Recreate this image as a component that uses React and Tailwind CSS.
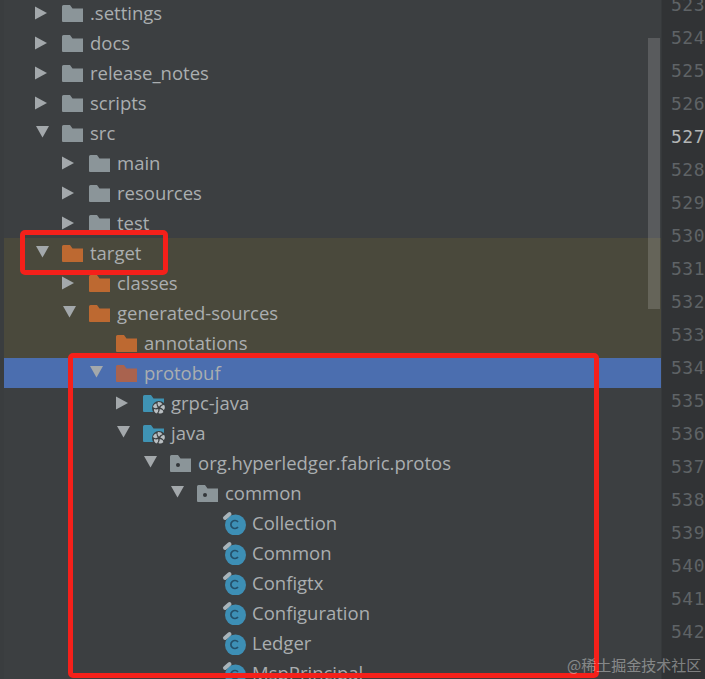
const rows = [
  { name: '.settings', pad: 'pl-[31px]', arrow: 'right', icon: 'folder' },
  { name: 'docs', pad: 'pl-[31px]', arrow: 'right', icon: 'folder' },
  { name: 'release_notes', pad: 'pl-[31px]', arrow: 'right', icon: 'folder' },
  { name: 'scripts', pad: 'pl-[31px]', arrow: 'right', icon: 'folder' },
  { name: 'src', pad: 'pl-[31px]', arrow: 'down', icon: 'folder' },
  { name: 'main', pad: 'pl-[58px]', arrow: 'right', icon: 'folder' },
  { name: 'resources', pad: 'pl-[58px]', arrow: 'right', icon: 'folder' },
  { name: 'test', pad: 'pl-[58px]', arrow: 'right', icon: 'folder' },
  { name: 'target', pad: 'pl-[31px]', arrow: 'down', icon: 'orange', bg: 'bg-[#4a493c]' },
  { name: 'classes', pad: 'pl-[58px]', arrow: 'right', icon: 'orange', bg: 'bg-[#4a493c]' },
  { name: 'generated-sources', pad: 'pl-[58px]', arrow: 'down', icon: 'orange', bg: 'bg-[#4a493c]' },
  { name: 'annotations', pad: 'pl-[85px]', arrow: 'none', icon: 'orange', bg: 'bg-[#4a493c]' },
  { name: 'protobuf', pad: 'pl-[85px]', arrow: 'down', icon: 'selected', bg: 'bg-[#4b6eaf]' },
  { name: 'grpc-java', pad: 'pl-[112px]', arrow: 'right', icon: 'source' },
  { name: 'java', pad: 'pl-[112px]', arrow: 'down', icon: 'source' },
  { name: 'org.hyperledger.fabric.protos', pad: 'pl-[139px]', arrow: 'down', icon: 'package' },
  { name: 'common', pad: 'pl-[166px]', arrow: 'down', icon: 'package' },
  { name: 'Collection', pad: 'pl-[193px]', arrow: 'none', icon: 'class' },
  { name: 'Common', pad: 'pl-[193px]', arrow: 'none', icon: 'class' },
  { name: 'Configtx', pad: 'pl-[193px]', arrow: 'none', icon: 'class' },
  { name: 'Configuration', pad: 'pl-[193px]', arrow: 'none', icon: 'class' },
  { name: 'Ledger', pad: 'pl-[193px]', arrow: 'none', icon: 'class' },
  { name: 'MspPrincipal', pad: 'pl-[193px]', arrow: 'none', icon: 'class' },
];

const lineNumbers = [523, 524, 525, 526, 527, 528, 529, 530, 531, 532, 533, 534, 535, 536, 537, 538, 539, 540, 541, 542];

const FOLDER = 'M0 1.5 Q0 0 1.5 0 H8 L10.5 3.5 H21 V17 H1 Q0 17 0 16 Z';

function Arrow({ dir }) {
  if (dir === 'down') {
    return (
      <svg width="14" height="12" viewBox="0 0 14 12" className="mt-[-3px]">
        <polygon points="1,0 14,0 7.5,11.5" fill="#a3a8ab" />
      </svg>
    );
  }
  return (
    <svg width="13" height="14" viewBox="0 0 13 14">
      <polygon points="0,0.5 12,7 0,13.5" fill="#a3a8ab" />
    </svg>
  );
}

function Folder({ color }) {
  return (
    <svg width="21" height="17" viewBox="0 0 21 17">
      <path d={FOLDER} fill={color} />
    </svg>
  );
}

function PackageFolder() {
  return (
    <svg width="21" height="17" viewBox="0 0 21 17">
      <path d={FOLDER} fill="#8b9599" />
      <circle cx="8" cy="10" r="2" fill="#33373a" />
    </svg>
  );
}

function SourceFolder() {
  return (
    <svg width="24" height="24" viewBox="0 0 24 24">
      <g transform="translate(0 4)">
        <path d={FOLDER} fill="#3f93b4" />
      </g>
      <circle cx="16" cy="17" r="7" fill="#3c3f41" />
      {[0, 72, 144, 216, 288].map((deg) => (
        <path
          key={deg}
          d="M16 15.7 Q13.6 13.2 15 11 Q18.4 10.8 19.4 13.3 Q17.5 13.7 16 15.7 Z"
          fill="#b9bec1"
          transform={`rotate(${deg} 16 17)`}
        />
      ))}
    </svg>
  );
}

function ClassIcon() {
  return (
    <svg width="26" height="24" viewBox="0 0 26 24" className="-ml-[2px]">
      <circle cx="13.5" cy="14" r="10.5" fill="#3d8fb5" />
      <path d="M3 7 L7.5 3" stroke="#a9b4ba" strokeWidth="4" strokeLinecap="round" />
      <path d="M16 11 A4 4 0 1 0 16 16" fill="none" stroke="#24506a" strokeWidth="1.7" />
    </svg>
  );
}

function RowIcon({ kind }) {
  if (kind === 'folder') return <Folder color="#8b9599" />;
  if (kind === 'orange') return <Folder color="#bd6931" />;
  if (kind === 'selected') return <Folder color="#a9634f" />;
  if (kind === 'package') return <PackageFolder />;
  if (kind === 'source') return <SourceFolder />;
  return <ClassIcon />;
}

function Row({ row }) {
  return (
    <div className={`flex items-center h-[30px] whitespace-nowrap ${row.pad} ${row.bg || ''}`}>
      <div className="w-[27px] shrink-0 flex items-center">
        {row.arrow !== 'none' && <Arrow dir={row.arrow} />}
      </div>
      <div className="w-[28px] shrink-0 flex items-center h-[22px]">
        <RowIcon kind={row.icon} />
      </div>
      <span className="text-[18.5px] text-[#aaaeb0]">{row.name}</span>
    </div>
  );
}

export default function App() {
  return (
    <div className="relative flex w-[705px] h-[679px] overflow-hidden bg-[#3c3f41] font-['Open_Sans',sans-serif]">
      <div className="w-[4px] shrink-0 bg-[#3a3d3f]" />

      {/* Project tree */}
      <div className="w-[657px] shrink-0 -mt-[2px]">
        {rows.map((row) => (
          <Row key={row.name} row={row} />
        ))}
      </div>

      {/* Line numbers */}
      <div className="w-[44px] shrink-0 bg-[#313335] border-l border-[#36393b] pl-[9px] -mt-[12px] font-['DejaVu_Sans_Mono',monospace] text-[18px]">
        {lineNumbers.map((n) => (
          <div key={n} className={`h-[33px] leading-[33px] tracking-[0.5px] ${n === 527 ? 'text-[#b4b6b6]' : 'text-[#5f6366]'}`}>
            {n}
          </div>
        ))}
      </div>

      {/* Scrollbar thumb */}
      <div className="absolute left-[648px] top-[38px] w-[12px] h-[271px] bg-[#ffffff]/15" />

      {/* Annotation boxes */}
      <div className="absolute left-[20px] top-[230px] w-[148px] h-[45px] border-[5px] border-[#f5201a] rounded-[5px]" />
      <div className="absolute left-[68px] top-[353px] w-[531px] h-[325px] border-[5px] border-[#f5201a] rounded-[5px]" />

      {/* Watermark */}
      <div className="absolute left-[567px] top-[654px] text-[15px] text-[#ffffff]/40 whitespace-nowrap font-['Noto_Sans_CJK_SC',sans-serif]">
        @稀土掘金技术社区
      </div>
    </div>
  );
}
